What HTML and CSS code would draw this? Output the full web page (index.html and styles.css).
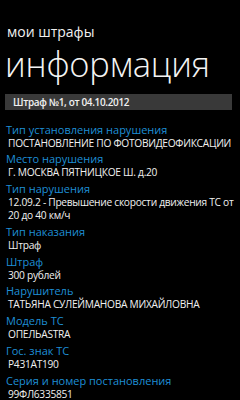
FILE: index.html
```html
<!DOCTYPE html>
<html lang="ru">
<head>
<meta charset="utf-8">
<link rel="stylesheet" href="styles.css">
</head>
<body>
<div class="page">
  <div class="app-title">мои штрафы</div>
  <div class="page-title">информация</div>
  <div class="bar">Штраф №1, от 04.10.2012</div>
  <div class="list">
    <div class="item"><div class="label">Тип установления нарушения</div><div class="value">ПОСТАНОВЛЕНИЕ ПО ФОТОВИДЕОФИКСАЦИИ</div></div>
    <div class="item"><div class="label">Место нарушения</div><div class="value">Г. МОСКВА ПЯТНИЦКОЕ Ш. д.20</div></div>
    <div class="item"><div class="label">Тип нарушения</div><div class="value">12.09.2 - Превышение скорости движения ТС от 20 до 40 км/ч</div></div>
    <div class="item"><div class="label">Тип наказания</div><div class="value">Штраф</div></div>
    <div class="item"><div class="label">Штраф</div><div class="value">300 рублей</div></div>
    <div class="item"><div class="label">Нарушитель</div><div class="value">ТАТЬЯНА СУЛЕЙМАНОВА МИХАЙЛОВНА</div></div>
    <div class="item"><div class="label">Модель ТС</div><div class="value">ОПЕЛЬASTRA</div></div>
    <div class="item"><div class="label">Гос. знак ТС</div><div class="value">Р431АТ190</div></div>
    <div class="item"><div class="label">Серия и номер постановления</div><div class="value">99ФЛ6335851</div></div>
  </div>
</div>
</body>
</html>
```
FILE: styles.css
```css
html, body {
  margin: 0;
  padding: 0;
  background: #000;
}
.page {
  width: 240px;
  height: 400px;
  overflow: hidden;
  background: #000;
  color: #fff;
  font-family: "Open Sans", "Noto Sans", sans-serif;
}
.app-title {
  padding: 24px 0 0 7px;
  font-size: 14px;
  line-height: 16px;
  color: #f0f0f0;
}
.page-title {
  padding-left: 5px;
  font-size: 34.5px;
  font-weight: 300;
  line-height: 47px;
  letter-spacing: -0.2px;
  color: #f4f4f4;
}
.bar {
  margin: 7px 8px 0 5px;
  height: 16px;
  line-height: 16px;
  background: #393939;
  padding-left: 8px;
  font-size: 10px;
  font-weight: 600;
  letter-spacing: -0.35px;
  color: #f0f0f0;
}
.list {
  padding: 11.5px 4px 0 6px;
}
.item {
  margin-bottom: 1.2px;
}
.label {
  font-size: 11px;
  line-height: 15px;
  letter-spacing: 0;
  color: #1e8fd6;
}
.value {
  padding-left: 2px;
  font-size: 10.2px;
  line-height: 13.5px;
  letter-spacing: -0.28px;
  color: #f0f0f0;
}
```
